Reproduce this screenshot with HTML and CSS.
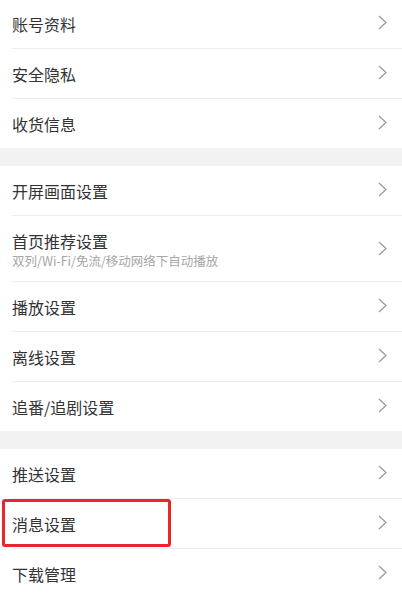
FILE: index.html
```html
<!DOCTYPE html>
<html lang="zh-CN">
<head>
<meta charset="utf-8">
<link rel="stylesheet" href="styles.css">
</head>
<body>
<div class="page">
  <div class="section first">
    <div class="row"><div class="inner"><span class="title">账号资料</span><svg class="chev" viewBox="0 0 9 15"><polyline points="1,1 8,7.5 1,14"/></svg></div></div>
    <div class="row"><div class="inner"><span class="title">安全隐私</span><svg class="chev" viewBox="0 0 9 15"><polyline points="1,1 8,7.5 1,14"/></svg></div></div>
    <div class="row"><div class="inner"><span class="title">收货信息</span><svg class="chev" viewBox="0 0 9 15"><polyline points="1,1 8,7.5 1,14"/></svg></div></div>
  </div>
  <div class="gap"></div>
  <div class="section">
    <div class="row"><div class="inner"><span class="title">开屏画面设置</span><svg class="chev" viewBox="0 0 9 15"><polyline points="1,1 8,7.5 1,14"/></svg></div></div>
    <div class="row tall"><div class="inner"><div class="texts"><span class="title">首页推荐设置</span><span class="sub">双列/Wi-Fi/免流/移动网络下自动播放</span></div><svg class="chev" viewBox="0 0 9 15"><polyline points="1,1 8,7.5 1,14"/></svg></div></div>
    <div class="row"><div class="inner"><span class="title">播放设置</span><svg class="chev" viewBox="0 0 9 15"><polyline points="1,1 8,7.5 1,14"/></svg></div></div>
    <div class="row"><div class="inner"><span class="title">离线设置</span><svg class="chev" viewBox="0 0 9 15"><polyline points="1,1 8,7.5 1,14"/></svg></div></div>
    <div class="row"><div class="inner"><span class="title">追番/追剧设置</span><svg class="chev" viewBox="0 0 9 15"><polyline points="1,1 8,7.5 1,14"/></svg></div></div>
  </div>
  <div class="gap"></div>
  <div class="section">
    <div class="row"><div class="inner"><span class="title">推送设置</span><svg class="chev" viewBox="0 0 9 15"><polyline points="1,1 8,7.5 1,14"/></svg></div></div>
    <div class="row marked"><div class="inner"><span class="title">消息设置</span><svg class="chev" viewBox="0 0 9 15"><polyline points="1,1 8,7.5 1,14"/></svg></div><div class="highlight"></div></div>
    <div class="row"><div class="inner"><span class="title">下载管理</span><svg class="chev" viewBox="0 0 9 15"><polyline points="1,1 8,7.5 1,14"/></svg></div></div>
  </div>
</div>
</body>
</html>
```

FILE: styles.css
```css
html, body {
  margin: 0;
  padding: 0;
  background: #ffffff;
}
body {
  font-family: "Noto Sans CJK SC", "Noto Sans", sans-serif;
  color: #333333;
  overflow: hidden;
}
.page {
  width: 402px;
}
.section {
  background: #ffffff;
}
.section.first {
  margin-top: -1px;
}
.gap {
  height: 18px;
  background: #f2f2f2;
}
.row {
  position: relative;
  padding-left: 12px;
}
.inner {
  height: 49px;
  display: flex;
  align-items: center;
  justify-content: space-between;
  padding-right: 15px;
  border-bottom: 1px solid #efefef;
}
.row:last-child .inner {
  border-bottom: none;
}
.row.tall .inner {
  height: 65px;
}
.title {
  font-size: 16px;
  line-height: 20px;
  color: #333333;
}
.texts {
  display: flex;
  flex-direction: column;
  margin-top: 1px;
}
.sub {
  font-size: 12.5px;
  line-height: 14px;
  color: #a6a6a6;
  margin-top: 3px;
}
.chev {
  width: 9px;
  height: 15px;
  flex: none;
  margin-top: -3px;
}
.row.tall .chev {
  margin-top: 0;
}
.chev polyline {
  fill: none;
  stroke: #999999;
  stroke-width: 1.25;
}
.highlight {
  position: absolute;
  left: 2px;
  top: 0;
  width: 169px;
  height: 48px;
  box-sizing: border-box;
  border: 3px solid #e8262b;
  border-radius: 3px;
}
```
